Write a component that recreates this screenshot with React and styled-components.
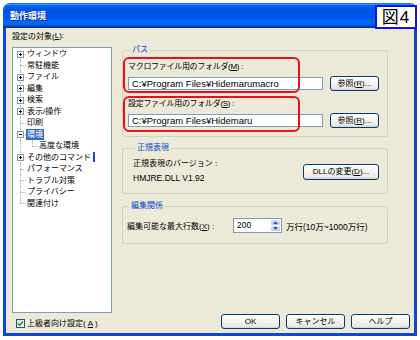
import React from 'react';
import styled, { createGlobalStyle } from 'styled-components';

const GlobalStyle = createGlobalStyle`
  html, body {
    margin: 0;
    padding: 0;
    background: #fff;
  }
  body {
    width: 420px;
    height: 340px;
    overflow: hidden;
    font-family: "Liberation Sans", "Noto Sans CJK JP", sans-serif;
    font-size: 8px;
    color: #000;
  }
`;

const Page = styled.div`
  position: relative;
  width: 420px;
  height: 340px;
  padding: 3px 0 0 3px;
  box-sizing: border-box;
  background: #fff;
`;

// 図番号のラベル（タイトルバーに重なる）
const Badge = styled.div`
  position: absolute;
  left: 375px;
  top: 5px;
  width: 42px;
  height: 24px;
  box-sizing: border-box;
  border: 2px solid #1010e8;
  background: #fff;
  display: flex;
  align-items: center;
  justify-content: center;
  font-family: "Liberation Sans", "Noto Sans CJK JP", sans-serif;
  font-size: 17px;
  line-height: 1;
  letter-spacing: 1px;
`;

const Window = styled.div`
  width: 414px;
  display: flex;
  flex-direction: column;
`;

const TitleBar = styled.div`
  height: 25px;
  padding-left: 7px;
  display: flex;
  align-items: center;
  border-radius: 7px 7px 0 0;
  background: linear-gradient(
    180deg,
    #0058ee 0%,
    #3593ff 4%,
    #288eff 6%,
    #127dff 8%,
    #036ffc 10%,
    #0262ee 14%,
    #0057e5 20%,
    #0054e3 24%,
    #0055eb 56%,
    #005bf5 66%,
    #026afe 76%,
    #0062ef 86%,
    #0052d6 92%,
    #0040ab 94%,
    #003092 100%
  );
  color: #fff;
  font-weight: bold;
  font-size: 9px;
  text-shadow: 1px 1px 0 #0f2a8c;
`;

const Frame = styled.div`
  border: 3px solid #0b47d8;
  border-top: none;
  background: #ece9d8;
`;

const Main = styled.div`
  display: flex;
  height: 285px;
  padding-left: 6px;
`;

const LeftPane = styled.div`
  width: 100px;
  display: flex;
  flex-direction: column;
`;

const PaneLabel = styled.div`
  height: 19px;
  box-sizing: border-box;
  padding-bottom: 4px;
  display: flex;
  align-items: center;
`;

const Mn = styled.span`
  text-decoration: underline;
`;

const TreeBox = styled.div`
  flex: 1;
  border: 1px solid #7f9db9;
  background: #fff;
`;

const TreeRow = styled.div`
  display: flex;
  align-items: center;
  height: 11.5px;
`;

const Gutter = styled.div`
  position: relative;
  flex: none;
  width: ${(p) => p.$w}px;
  height: 100%;

  &::before {
    content: '';
    display: ${(p) => (p.$noVert ? 'none' : 'block')};
    position: absolute;
    left: ${(p) => p.$x}px;
    top: ${(p) => (p.$first ? '50%' : '0')};
    bottom: ${(p) => (p.$last ? '50%' : '0')};
    border-left: 1px dotted #b4b4b4;
  }

  &::after {
    content: '';
    display: ${(p) => (p.$noBranch ? 'none' : 'block')};
    position: absolute;
    left: ${(p) => p.$x}px;
    right: 0;
    top: 50%;
    border-top: 1px dotted #b4b4b4;
  }
`;

const BoxIcon = styled.svg`
  position: absolute;
  left: ${(p) => p.$x - 3}px;
  top: calc(50% - 3px);
  z-index: 1;
`;

const TreeLabel = styled.span`
  padding: 0 1px;
  line-height: 11px;
  white-space: nowrap;
  background: ${(p) => (p.$selected ? '#316ac5' : 'transparent')};
  color: ${(p) => (p.$selected ? '#fff' : '#000')};
`;

const Caret = styled.span`
  width: 2px;
  height: 10px;
  margin-left: 1px;
  background: #1e3fd0;
`;

const RightPane = styled.div`
  margin-left: 10px;
  width: 266px;
  display: flex;
  flex-direction: column;
`;

const Group = styled.fieldset`
  margin: ${(p) => p.$mt}px 0 0;
  padding: ${(p) => p.$pad};
  border: 1px solid #d0d0bf;
  border-radius: 3px;
  min-width: 0;
`;

const Legend = styled.legend`
  margin-left: 2px;
  padding: 0 2px;
  line-height: 10px;
  font-size: 8px;
  color: #0046d5;
`;

// 赤枠の注釈
const Field = styled.div`
  position: relative;
  margin-top: ${(p) => p.$mt}px;

  &::after {
    content: '';
    position: absolute;
    left: -5px;
    top: ${(p) => p.$top}px;
    width: 177px;
    height: 36px;
    box-sizing: border-box;
    border: 2px solid #e8101c;
    border-radius: 6px;
    pointer-events: none;
  }
`;

const FieldLabel = styled.div`
  height: 10px;
  line-height: 10px;
  margin-bottom: 4px;
  letter-spacing: -0.3px;
`;

const FieldRow = styled.div`
  display: flex;
  align-items: center;
  gap: 7px;
  height: 15px;
`;

const TextBox = styled.div`
  width: 195px;
  height: 13px;
  box-sizing: border-box;
  border: 1px solid #7f9db9;
  background: #fff;
  padding-left: 3px;
  line-height: 11px;
  font-size: 9.5px;
  white-space: nowrap;
`;

const XpButton = styled.button`
  width: ${(p) => p.$w}px;
  height: ${(p) => p.$h || 15}px;
  box-sizing: border-box;
  padding: 0;
  border: 1px solid #003c74;
  border-radius: 3px;
  background: linear-gradient(180deg, #ffffff 0%, #f3f2ee 50%, #eceae3 85%, #d6d0c5 100%);
  font-family: inherit;
  font-size: 8px;
  line-height: 1;
  color: #000;
  display: flex;
  align-items: center;
  justify-content: center;
`;

const InfoRow = styled.div`
  display: flex;
  align-items: center;
  justify-content: space-between;
`;

const InfoText = styled.div`
  line-height: 14px;
`;

const DllName = styled.span`
  font-size: 8.5px;
`;

const EditRow = styled.div`
  display: flex;
  align-items: center;
  height: 15px;
`;

const EditLabel = styled.div`
  width: 106px;
  white-space: nowrap;
`;

const Spinner = styled.div`
  width: 49px;
  height: 15px;
  box-sizing: border-box;
  border: 1px solid #7f9db9;
  background: #fff;
  display: flex;
`;

const SpinValue = styled.div`
  flex: 1;
  padding-left: 3px;
  line-height: 13px;
  font-size: 8.5px;
`;

const SpinCol = styled.div`
  width: 11px;
  display: flex;
  flex-direction: column;
  padding: 1px;
  gap: 1px;
  box-sizing: border-box;
`;

const SpinHalf = styled.div`
  flex: 1;
  border-radius: 1px;
  background: linear-gradient(180deg, #dce6fb 0%, #c1d3fb 60%, #b3c7f5 100%);
  display: flex;
  align-items: center;
  justify-content: center;
`;

const EditNote = styled.div`
  margin-left: 4px;
  white-space: nowrap;
  font-size: 8.5px;
`;

const Footer = styled.div`
  height: 20px;
  display: flex;
  justify-content: space-between;
  align-items: flex-start;
  padding: 0 4px 0 10px;
`;

const CheckRow = styled.label`
  margin-top: 6px;
  display: flex;
  align-items: center;
  gap: 2px;
  line-height: 9px;
`;

const CheckBox = styled.span`
  width: 9px;
  height: 9px;
  box-sizing: border-box;
  border: 1px solid #1c5180;
  background: linear-gradient(135deg, #dcdcd7 0%, #fff 100%);
  display: flex;
  align-items: center;
  justify-content: center;
`;

const ButtonBar = styled.div`
  margin-top: 1px;
  display: flex;
  gap: 6px;
`;

const treeItems = [
  { label: 'ウィンドウ', box: 'plus' },
  { label: '常駐機能' },
  { label: 'ファイル', box: 'plus' },
  { label: '編集', box: 'plus' },
  { label: '検索', box: 'plus' },
  { label: '表示/操作', box: 'plus' },
  { label: '印刷' },
  { label: '環境', box: 'minus', selected: true },
  { label: '高度な環境', child: true },
  { label: 'その他のコマンド', box: 'plus', caret: true },
  { label: 'パフォーマンス' },
  { label: 'トラブル対策' },
  { label: 'プライバシー' },
  { label: '関連付け' },
];

const ExpandBox = ({ kind, x }) => (
  <BoxIcon $x={x} width="7" height="7" viewBox="0 0 7 7">
    <rect x="0.5" y="0.5" width="6" height="6" fill="#fff" stroke="#7a98af" />
    <path d="M2 3.5h3" stroke="#000" strokeWidth="1" />
    {kind === 'plus' && <path d="M3.5 2v3" stroke="#000" strokeWidth="1" />}
  </BoxIcon>
);

const Tree = () => (
  <TreeBox>
    {treeItems.map((item, i) => {
      const first = i === 0;
      const last = i === treeItems.length - 1;
      if (item.child) {
        return (
          <TreeRow key={item.label}>
            <Gutter $w={13} $x={7} $noBranch />
            <Gutter $w={12} $x={6} $last />
            <TreeLabel>{item.label}</TreeLabel>
          </TreeRow>
        );
      }
      return (
        <TreeRow key={item.label}>
          <Gutter $w={13} $x={7} $first={first} $last={last}>
            {item.box && <ExpandBox kind={item.box} x={7} />}
          </Gutter>
          <TreeLabel $selected={item.selected}>{item.label}</TreeLabel>
          {item.caret && <Caret />}
        </TreeRow>
      );
    })}
  </TreeBox>
);

const App = () => {
  return (
    <Page>
      <GlobalStyle />
      <Window>
        <TitleBar>動作環境</TitleBar>
        <Frame>
          <Main>
            <LeftPane>
              <PaneLabel>
                設定の対象(<Mn>L</Mn>):
              </PaneLabel>
              <Tree />
            </LeftPane>

            <RightPane>
              <Group $mt={17} $pad="7px 8px 8px 5px">
                <Legend>パス</Legend>
                <Field $mt={0} $top={-5}>
                  <FieldLabel>
                    マクロファイル用のフォルダ(<Mn>M</Mn>) :
                  </FieldLabel>
                  <FieldRow>
                    <TextBox>C:¥Program Files¥Hidemarumacro</TextBox>
                    <XpButton $w={49}>
                      参照(<Mn>R</Mn>)...
                    </XpButton>
                  </FieldRow>
                </Field>
                <Field $mt={8} $top={-3}>
                  <FieldLabel>
                    設定ファイル用のフォルダ(<Mn>S</Mn>) :
                  </FieldLabel>
                  <FieldRow>
                    <TextBox>C:¥Program Files¥Hidemaru</TextBox>
                    <XpButton $w={49}>
                      参照(<Mn>R</Mn>)...
                    </XpButton>
                  </FieldRow>
                </Field>
              </Group>

              <Group $mt={6} $pad="4px 8px 7px 10px">
                <Legend>正規表現</Legend>
                <InfoRow>
                  <InfoText>
                    正規表現のバージョン :
                    <br />
                    <DllName>HMJRE.DLL V1.92</DllName>
                  </InfoText>
                  <XpButton $w={76} $h={16}>
                    DLLの変更(<Mn>D</Mn>)...
                  </XpButton>
                </InfoRow>
              </Group>

              <Group $mt={7} $pad="7px 0 10px 4px">
                <Legend>編集関係</Legend>
                <EditRow>
                  <EditLabel>
                    編集可能な最大行数(<Mn>X</Mn>) :
                  </EditLabel>
                  <Spinner>
                    <SpinValue>200</SpinValue>
                    <SpinCol>
                      <SpinHalf>
                        <svg width="5" height="3" viewBox="0 0 5 3">
                          <path d="M0 3L2.5 0L5 3Z" fill="#4d6185" />
                        </svg>
                      </SpinHalf>
                      <SpinHalf>
                        <svg width="5" height="3" viewBox="0 0 5 3">
                          <path d="M0 0L2.5 3L5 0Z" fill="#4d6185" />
                        </svg>
                      </SpinHalf>
                    </SpinCol>
                  </Spinner>
                  <EditNote>万行(10万~1000万行)</EditNote>
                </EditRow>
              </Group>
            </RightPane>
          </Main>

          <Footer>
            <CheckRow>
              <CheckBox>
                <svg width="7" height="7" viewBox="0 0 7 7">
                  <path d="M1 3.5L2.8 5.3L6 1.5" fill="none" stroke="#21a121" strokeWidth="1.6" />
                </svg>
              </CheckBox>
              上級者向け設定(<Mn>A</Mn>)
            </CheckRow>
            <ButtonBar>
              <XpButton $w={59}>OK</XpButton>
              <XpButton $w={59}>キャンセル</XpButton>
              <XpButton $w={59}>ヘルプ</XpButton>
            </ButtonBar>
          </Footer>
        </Frame>
      </Window>
      <Badge>図4</Badge>
    </Page>
  );
};

export default App;
